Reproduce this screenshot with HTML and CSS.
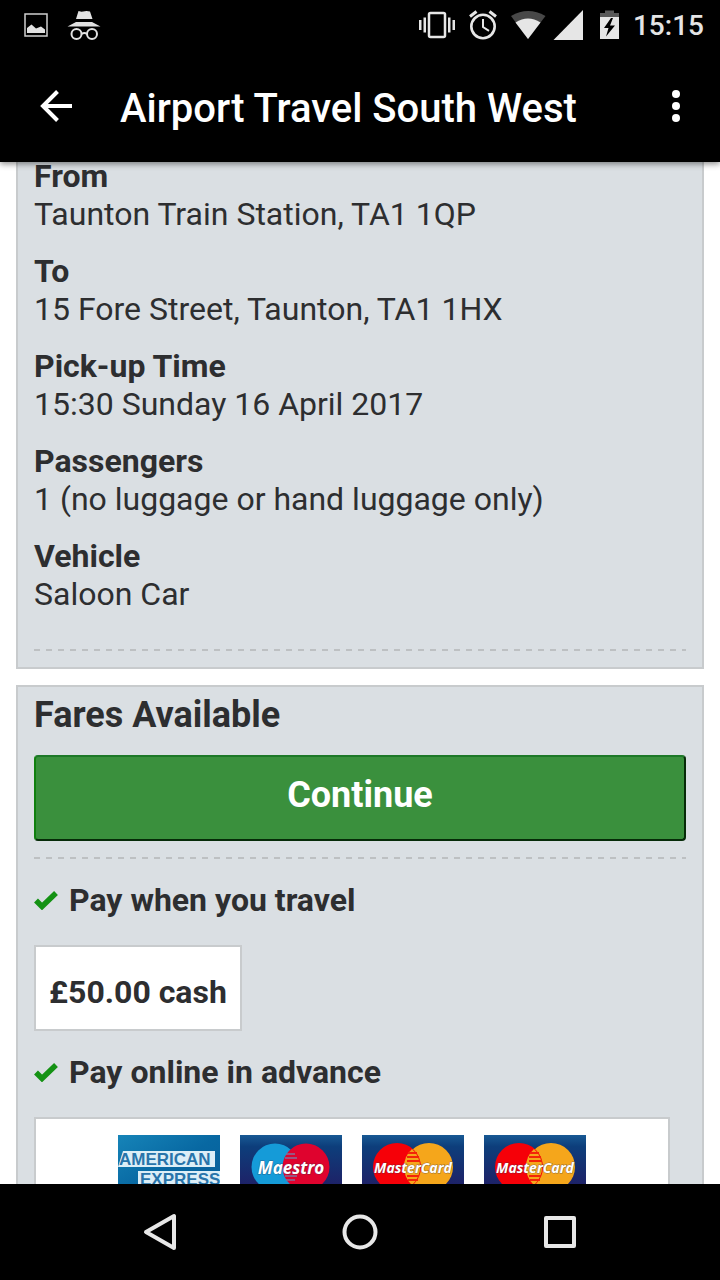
FILE: index.html
```html
<!DOCTYPE html>
<html lang="en">
<head>
<meta charset="utf-8">
<meta name="viewport" content="width=device-width, initial-scale=1">
<title>Airport Travel South West</title>
<link rel="stylesheet" href="styles.css">
</head>
<body>
<header class="top">
  <div class="status">
    <svg width="80" height="50" viewBox="0 0 80 50" fill="#e2e2e2" aria-hidden="true">
      <rect x="1" y="14" width="22" height="22" fill="none" stroke="#cfcfcf" stroke-width="1.5"/>
      <path d="M3 33v-5l4.500-3.500 4.500 4 5-2 4 3v3.500z"/>
      <path d="M54.500 11l3 .8 5-.8 3.500.4 2.500 7.600h-16.500zM52 22h16l8.500 4.500H43.500z"/>
      <circle cx="52.500" cy="34" r="5" fill="none" stroke="#e2e2e2" stroke-width="2"/>
      <circle cx="68" cy="34" r="5" fill="none" stroke="#e2e2e2" stroke-width="2"/>
      <path d="M57.500 34q3-2 5.500 0" fill="none" stroke="#e2e2e2" stroke-width="2"/>
    </svg>
    <div class="status-right">
      <svg width="206" height="50" viewBox="414 0 206 50" fill="#e6e6e6" aria-hidden="true">
        <rect x="429" y="13" width="16" height="24" rx="1.500" fill="none" stroke="#e6e6e6" stroke-width="2.500"/>
        <path d="M419 20h2.500v10H419zM423.500 17.500h2.500v15h-2.500zM448 17.500h2.500v15H448zM452.500 20h2.500v10h-2.500z"/>
        <g fill="none" stroke="#e6e6e6">
          <circle cx="483" cy="26.500" r="11.700" stroke-width="2.600"/>
          <path d="M483 19v8l6 3.800" stroke-width="2"/>
          <path d="M470 16.500l6.500-5M496 16.500l-6.500-5" stroke-width="3"/>
        </g>
        <path d="M511 16q17-10 34.500 0L528 39z" fill="#484848"/>
        <path d="M515.500 22.500q12.500-8 25 0L528 39z"/>
        <path d="M583 10v30h-29.500z"/>
        <path d="M600 17v-4h5v-2.500h9V13h5v4z" fill="#595959"/>
        <path d="M600 17h19v22h-19z"/>
        <path d="M611 18l-7 10h4.500L606 36.500l9-11h-5l3-7.500z" fill="#000"/>
      </svg>
      <time class="clock">15:15</time>
    </div>
  </div>
  <div class="appbar">
    <button class="icon-button" type="button" aria-label="Back">
      <svg width="34" height="34" viewBox="0 0 34 34" fill="none" stroke="#fff" stroke-width="4" aria-hidden="true"><path d="M18.500 2.500L4 17l14.500 14.500M4 17h29"/></svg>
    </button>
    <h1 class="title">Airport Travel South West</h1>
    <button class="icon-button" type="button" aria-label="More options">
      <svg width="8" height="34" viewBox="0 0 8 34" fill="#fff" aria-hidden="true"><circle cx="4" cy="5" r="4"/><circle cx="4" cy="17" r="4"/><circle cx="4" cy="29" r="4"/></svg>
    </button>
  </div>
</header>

<main class="content">
  <section class="panel journey">
    <dl class="details">
      <div><dt>From</dt><dd>Taunton Train Station, TA1 1QP</dd></div>
      <div><dt>To</dt><dd>15 Fore Street, Taunton, TA1 1HX</dd></div>
      <div><dt>Pick-up Time</dt><dd>15:30 Sunday 16 April 2017</dd></div>
      <div><dt>Passengers</dt><dd>1 (no luggage or hand luggage only)</dd></div>
      <div><dt>Vehicle</dt><dd>Saloon Car</dd></div>
    </dl>
    <hr class="divider">
  </section>

  <section class="panel fares">
    <h2 class="fares-title">Fares Available</h2>
    <button class="continue" type="button">Continue</button>
    <hr class="divider">
    <h3 class="option">
      <svg width="24" height="20" viewBox="0 0 24 20" aria-hidden="true"><path d="M2 10.500l6 6L22 3" fill="none" stroke="#149214" stroke-width="5.500"/></svg>
      Pay when you travel
    </h3>
    <div class="price">£50.00 cash</div>
    <h3 class="option">
      <svg width="24" height="20" viewBox="0 0 24 20" aria-hidden="true"><path d="M2 10.500l6 6L22 3" fill="none" stroke="#149214" stroke-width="5.500"/></svg>
      Pay online in advance
    </h3>
    <div class="cards">
      <svg class="card" viewBox="0 0 102 64" role="img" aria-label="American Express">
        <defs>
          <linearGradient id="amex" x1="0" y1="0" x2="1" y2="1"><stop offset="0" stop-color="#1684b8"/><stop offset=".5" stop-color="#0868a2"/><stop offset="1" stop-color="#075d98"/></linearGradient>
          <linearGradient id="navy" x1="0" y1="0" x2="0" y2="1"><stop offset="0" stop-color="#185994"/><stop offset=".18" stop-color="#0d3e7b"/><stop offset="1" stop-color="#241760"/></linearGradient>
        </defs>
        <rect width="102" height="64" fill="url(#amex)"/>
        <path d="M5 16h92v16H0z" fill="#dceef7"/>
        <path d="M20 36h82v18H20z" fill="#dceef7"/>
        <g class="amex-text"><text x="1" y="30">AMERICAN</text><text x="22" y="50">EXPRESS</text></g>
      </svg>
      <svg class="card" viewBox="0 0 102 64" role="img" aria-label="Maestro">
        <rect width="102" height="64" fill="url(#navy)"/>
        <circle cx="35" cy="32" r="23.500" fill="#159bd8"/>
        <circle cx="66" cy="32" r="23.500" fill="#df032e"/>
        <path d="M46 19h9M45 23h12M45 41h12M46 45h9" stroke="#82739f" stroke-width="1.500"/>
        <text class="card-text maestro" x="51" y="39">Maestro</text>
      </svg>
      <svg class="card" viewBox="0 0 102 64" role="img" aria-label="MasterCard">
        <rect width="102" height="64" fill="url(#navy)"/>
        <circle cx="67" cy="32" r="24" fill="#f5a61b"/>
        <circle cx="35" cy="32" r="24" fill="#f60008"/>
        <path d="M50 14a24 24 0 0 1 0 36 24 24 0 0 1 0-36" fill="#f5a61b"/>
        <path d="M46 18h9M45 22h12M45 26h13M45 41h12M46 45h10" stroke="#f32508" stroke-width="2"/>
        <text class="card-text mastercard" x="51" y="38">MasterCard</text>
      </svg>
      <svg class="card" viewBox="0 0 102 64" role="img" aria-label="MasterCard Debit">
        <rect width="102" height="64" fill="url(#navy)"/>
        <circle cx="67" cy="32" r="24" fill="#f5a61b"/>
        <circle cx="35" cy="32" r="24" fill="#f60008"/>
        <path d="M50 14a24 24 0 0 1 0 36 24 24 0 0 1 0-36" fill="#f5a61b"/>
        <path d="M46 18h9M45 22h12M45 26h13M45 41h12M46 45h10" stroke="#f32508" stroke-width="2"/>
        <text class="card-text mastercard" x="51" y="38">MasterCard</text>
      </svg>
    </div>
  </section>
</main>

<nav class="system-nav" aria-label="System">
  <button class="icon-button" type="button" aria-label="Back">
    <svg width="40" height="40" viewBox="0 0 40 40" fill="none" stroke="#e8e8e8" stroke-width="4" stroke-linejoin="round" aria-hidden="true"><path d="M34 4v32L6 20z"/></svg>
  </button>
  <button class="icon-button" type="button" aria-label="Home">
    <svg width="40" height="40" viewBox="0 0 40 40" fill="none" stroke="#e8e8e8" stroke-width="4" aria-hidden="true"><circle cx="20" cy="20" r="15.500"/></svg>
  </button>
  <button class="icon-button" type="button" aria-label="Recent apps">
    <svg width="40" height="40" viewBox="0 0 40 40" fill="none" stroke="#e8e8e8" stroke-width="4" stroke-linejoin="round" aria-hidden="true"><rect x="6" y="6" width="28" height="28"/></svg>
  </button>
</nav>
</body>
</html>
```

FILE: styles.css
```css
* { box-sizing: border-box; }

body {
  margin: 0;
  height: 100vh;
  display: flex;
  flex-direction: column;
  overflow: hidden;
  background: #fff;
  color: #2d2e30;
  font-family: Roboto, "Liberation Sans", sans-serif;
  font-size: 32px;
  line-height: 38px;
}

h1, h2, h3, dl, dd { margin: 0; }
svg { display: block; }
button { font-family: inherit; cursor: pointer; }

.icon-button {
  display: flex;
  align-items: center;
  justify-content: center;
  padding: 0;
  border: 0;
  background: none;
}

/* Status bar and app bar */
.top {
  position: relative;
  z-index: 1;
  flex: none;
  background: #000;
  color: #fff;
  box-shadow: 0 2px 6px rgba(0, 0, 0, 0.45);
}

.status {
  display: flex;
  justify-content: space-between;
  height: 50px;
  padding: 0 16px 0 24px;
}

.status-right {
  display: flex;
  align-items: center;
  gap: 13px;
}

.clock {
  color: #e4e4e4;
  font-size: 28px;
  font-weight: 500;
  padding-top: 2px;
}

.appbar {
  display: flex;
  align-items: center;
  height: 112px;
  padding: 0 40px 0 39px;
}

.title {
  flex: 1;
  padding: 6px 0 0 47px;
  font-size: 40px;
  font-weight: 500;
  line-height: 48px;
}

/* Booking details */
.content {
  flex: 1;
  min-height: 0;
  overflow: hidden;
  padding: 0 16px;
}

.panel {
  border: 2px solid #c8cbcd;
  background: #dadfe3;
  padding: 0 16px 16px;
}

.journey {
  margin: 0 0 16px;
  border-top: 0;
}

.details {
  display: flex;
  flex-direction: column;
  gap: 19px;
}

.details dt { font-weight: 700; }

/* The first label sits tight under the app bar */
.details div:first-child dt { line-height: 28px; padding-bottom: 5px; }

.divider {
  height: 2px;
  margin: 16px 0;
  border: 0;
  background: repeating-linear-gradient(to right, #bdc0c2 0 6px, transparent 6px 12px);
}

.journey .divider { margin: 36px 0 0; }

/* Fares */
.fares-title {
  padding: 8px 0 20px;
  font-size: 36px;
  line-height: 40px;
}

.continue {
  display: block;
  width: 100%;
  height: 86px;
  padding: 0 0 6px;
  border: 2px solid;
  border-color: #1d7828 #062b08 #062b08 #10800f;
  border-radius: 4px;
  background: #3a903d;
  color: #fff;
  font-size: 36px;
  font-weight: 700;
}

.option {
  display: flex;
  align-items: center;
  gap: 11px;
  padding: 6px 0;
  font-size: 32px;
}

.price {
  width: fit-content;
  margin: 20px 0 16px;
  padding: 26px 13px 18px;
  border: 2px solid #c8cbcd;
  background: #fff;
  font-weight: 700;
}

.cards {
  display: flex;
  justify-content: center;
  gap: 20px;
  margin: 20px 16px 0 0;
  padding: 16px;
  border: 2px solid #c8cbcd;
  background: #fff;
}

.card { width: 102px; height: 64px; }

.card text { font-family: "Open Sans", sans-serif; font-weight: 700; }

.card .amex-text text {
  fill: #2874aa;
  font-family: "Liberation Sans", sans-serif;
  font-size: 17px;
}

.card-text {
  fill: #fff;
  font-style: italic;
  text-anchor: middle;
  paint-order: stroke;
  stroke: #33334d;
  stroke-opacity: 0.5;
  stroke-width: 1px;
}

.maestro { font-size: 17px; }
.mastercard { font-size: 14px; }

.system-nav {
  flex: none;
  display: flex;
  justify-content: center;
  align-items: center;
  gap: 160px;
  height: 96px;
  background: #000;
}
```
